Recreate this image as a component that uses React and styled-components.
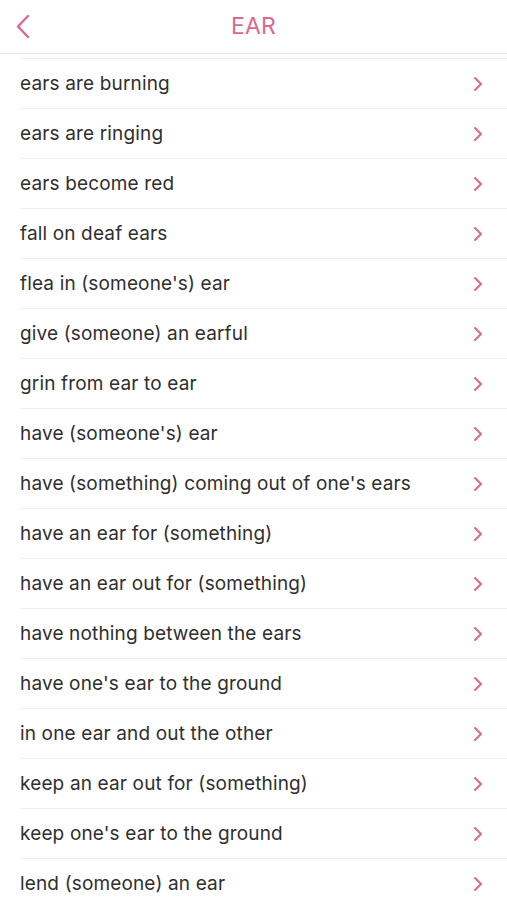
import React from "react";
import styled, { createGlobalStyle } from "styled-components";

const GlobalStyle = createGlobalStyle`
    html, body {
        margin: 0;
        padding: 0;
        background: #ffffff;
        font-family: Inter, "Liberation Sans", sans-serif;
    }
`;

const PINK = "#dc6790";

const Page = styled.div`
    width: 507px;
    height: 900px;
    overflow: hidden;
    background: #ffffff;
`;

const Header = styled.div`
    position: relative;
    display: flex;
    align-items: center;
    justify-content: center;
    height: 53px;
    border-bottom: 1.5px solid #e9e9e9;
`;

const BackButton = styled.div`
    position: absolute;
    left: 14px;
    top: 13px;
    display: flex;
`;

const Title = styled.div`
    font-size: 23px;
    color: ${PINK};
    letter-spacing: 0.2px;
    margin-top: -1px;
`;

const List = styled.div`
    margin-top: 4px;
    padding-left: 20px;
`;

const Row = styled.div`
    display: flex;
    align-items: center;
    justify-content: space-between;
    height: 49px;
    border-top: 1.5px solid #eeeeee;
    padding-right: 24px;
`;

const Label = styled.div`
    font-size: 19px;
    color: #2f2f2f;
    letter-spacing: 0.15px;
`;

const Chevron = () => (
    <svg width="10" height="16" viewBox="0 0 10 16">
        <path d="M2 2 L8 8 L2 14" fill="none" stroke={PINK} strokeWidth="2" strokeLinecap="round" strokeLinejoin="round" />
    </svg>
);

const items = [
    "ears are burning",
    "ears are ringing",
    "ears become red",
    "fall on deaf ears",
    "flea in (someone's) ear",
    "give (someone) an earful",
    "grin from ear to ear",
    "have (someone's) ear",
    "have (something) coming out of one's ears",
    "have an ear for (something)",
    "have an ear out for (something)",
    "have nothing between the ears",
    "have one's ear to the ground",
    "in one ear and out the other",
    "keep an ear out for (something)",
    "keep one's ear to the ground",
    "lend (someone) an ear",
];

const App = () => {
    return (
        <Page>
            <GlobalStyle />
            <Header>
                <BackButton>
                    <svg width="20" height="28" viewBox="0 0 20 28">
                        <path d="M14 3 L4 13.5 L14 24" fill="none" stroke={PINK} strokeWidth="2.4" strokeLinecap="round" strokeLinejoin="round" />
                    </svg>
                </BackButton>
                <Title>EAR</Title>
            </Header>
            <List>
                {items.map((item) => (
                    <Row key={item}>
                        <Label>{item}</Label>
                        <Chevron />
                    </Row>
                ))}
            </List>
        </Page>
    );
};

export default App;
